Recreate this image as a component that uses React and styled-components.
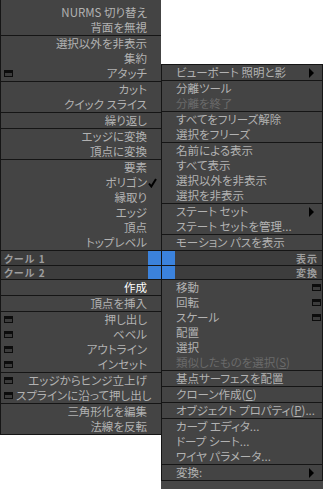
import React from 'react'
import styled, { createGlobalStyle } from 'styled-components'

const GlobalStyle = createGlobalStyle`
  html, body { margin: 0; padding: 0; background: #ffffff; }
  body {
    font-family: "Noto Sans CJK JP", "Noto Sans", sans-serif;
    font-feature-settings: "palt";
  }
`

const LINE = '#151515'

const upperLeft = [
  [{ t: 'NURMS 切り替え' }, { t: '背面を無視' }],
  [{ t: '選択以外を非表示' }, { t: '集約' }, { t: 'アタッチ', box: true }],
  [{ t: 'カット' }, { t: 'クイック スライス' }],
  [{ t: '繰り返し' }],
  [{ t: 'エッジに変換' }, { t: '頂点に変換' }],
  [
    { t: '要素' },
    { t: 'ポリゴン', check: true },
    { t: '縁取り' },
    { t: 'エッジ' },
    { t: '頂点' },
    { t: 'トップレベル' },
  ],
]

const lowerLeft = [
  [{ t: '作成', hot: true }],
  [{ t: '頂点を挿入' }],
  [
    { t: '押し出し', box: true },
    { t: 'ベベル', box: true },
    { t: 'アウトライン', box: true },
    { t: 'インセット', box: true },
  ],
  [
    { t: 'エッジからヒンジ立上げ', box: true },
    { t: 'スプラインに沿って押し出し', box: true },
  ],
  [{ t: '三角形化を編集' }, { t: '法線を反転' }],
]

const upperRight = [
  [{ t: 'ビューポート 照明と影', sub: true }],
  [{ t: '分離ツール' }, { t: '分離を終了', dim: true }],
  [{ t: 'すべてをフリーズ解除' }, { t: '選択をフリーズ' }],
  [{ t: '名前による表示' }, { t: 'すべて表示' }, { t: '選択以外を非表示' }, { t: '選択を非表示' }],
  [{ t: 'ステート セット', sub: true }, { t: 'ステート セットを管理...' }],
  [{ t: 'モーション パスを表示' }],
]

const lowerRight = [
  [
    { t: '移動', box: true },
    { t: '回転', box: true },
    { t: 'スケール', box: true },
    { t: '配置' },
    { t: '選択' },
    { t: '類似したものを選択', key: 'S', dim: true },
  ],
  [{ t: '基点サーフェスを配置' }],
  [{ t: 'クローン作成', key: 'C' }],
  [{ t: 'オブジェクト プロパティ', key: 'P', tail: '...' }],
  [{ t: 'カーブ エディタ...' }, { t: 'ドープ シート...' }, { t: 'ワイヤ パラメータ...' }],
  [{ t: '変換:', sub: true }],
]

const QuadMenu = styled.div`
  display: grid;
  grid-template-columns: 161px 162px;
  grid-template-rows: auto auto 1fr;
  width: 323px;
  height: 489px;
  overflow: hidden;
`

const Quadrant = styled.div`
  background: #444444;
  border-left: 1px solid ${LINE};
  border-right: ${p => (p.$side === 'right' ? `1px solid ${LINE}` : 'none')};
  border-top: ${p => (p.$upper && p.$side === 'right' ? `1px solid ${LINE}` : 'none')};
  border-bottom: 1px solid ${LINE};
  align-self: ${p => (p.$upper ? 'end' : 'start')};
  display: flex;
  flex-direction: column;
`

const Group = styled.div`
  padding-top: ${p => p.$pad || 0}px;
  & + & {
    border-top: 1px solid ${LINE};
  }
`

const Item = styled.div`
  height: 15px;
  display: grid;
  grid-template-columns: ${p => (p.$side === 'left' ? '15px 1fr 14px' : '14px 1fr 14px')};
  align-items: center;
  font-size: 11.5px;
  line-height: 15px;
  white-space: nowrap;
  color: ${p => (p.$dim ? '#6a6a6a' : p.$hot ? '#ffffff' : '#b2b2b2')};
`

const Label = styled.span`
  text-align: ${p => (p.$side === 'left' ? 'right' : 'left')};
  u {
    text-decoration: underline;
    text-underline-offset: 1px;
  }
`

const OptionBox = styled.span`
  width: 9px;
  height: 7px;
  box-sizing: border-box;
  border: 1px solid #0c0c0c;
  border-top-width: 3px;
  background: #3c3c3c;
  justify-self: ${p => (p.$side === 'left' ? 'start' : 'end')};
  margin: ${p => (p.$side === 'left' ? '0 0 0 3px' : '0 1px 0 0')};
`

const SubArrow = styled.span`
  width: 0;
  height: 0;
  border-left: 5px solid #000000;
  border-top: 5px solid transparent;
  border-bottom: 5px solid transparent;
  justify-self: start;
  margin-left: 1px;
`

const Check = styled.svg`
  width: 9px;
  height: 10px;
  justify-self: start;
  margin-left: 1px;
`

const TitleBar = styled.div`
  height: ${p => p.$h}px;
  display: flex;
  flex-direction: ${p => (p.$side === 'left' ? 'row' : 'row-reverse')};
  align-items: stretch;
  background: #3d3d3d;
  border-top: ${p => (p.$upper ? `1px solid ${LINE}` : 'none')};
  border-bottom: ${p => (p.$upper ? 'none' : `1px solid ${LINE}`)};
`

const TitleText = styled.span`
  flex: 1;
  display: flex;
  align-items: center;
  justify-content: ${p => (p.$side === 'left' ? 'flex-start' : 'flex-end')};
  padding: 0 4px 0 3px;
  font-size: 10px;
  font-weight: 700;
  color: #9e9e9e;
  letter-spacing: 1px;
`

const Swatch = styled.span`
  width: 13px;
  background: #3b82dc;
`

const ViewportPeek = styled.div`
  grid-column: 2;
  grid-row: 3;
  background: #464646;
`

function MenuItem({ item, side }) {
  const label = (
    <Label $side={side}>
      {item.t}
      {item.key && (
        <>
          (<u>{item.key}</u>)
        </>
      )}
      {item.tail}
    </Label>
  )
  if (side === 'left') {
    return (
      <Item $side={side} $dim={item.dim} $hot={item.hot}>
        {item.box ? <OptionBox $side={side} /> : <span />}
        {label}
        {item.check ? (
          <Check viewBox="0 0 9 10">
            <path d="M1 5.5 L3.3 8.5 L8 1" fill="none" stroke="#000" strokeWidth="2" />
          </Check>
        ) : (
          <span />
        )}
      </Item>
    )
  }
  return (
    <Item $side={side} $dim={item.dim} $hot={item.hot}>
      <span />
      {label}
      {item.box ? <OptionBox $side={side} /> : item.sub ? <SubArrow /> : <span />}
    </Item>
  )
}

function Quad({ side, upper, title, groups, firstPad, titleH }) {
  const bar = (
    <TitleBar $side={side} $upper={upper} $h={titleH}>
      <TitleText $side={side}>{title}</TitleText>
      <Swatch />
    </TitleBar>
  )
  return (
    <Quadrant $side={side} $upper={upper}>
      {!upper && bar}
      <div>
        {groups.map((g, i) => (
          <Group key={i} $pad={i === 0 ? firstPad : 0}>
            {g.map((item, j) => (
              <MenuItem key={j} item={item} side={side} />
            ))}
          </Group>
        ))}
      </div>
      {upper && bar}
    </Quadrant>
  )
}

export default function App() {
  return (
    <>
      <GlobalStyle />
      <QuadMenu>
        <Quad side="left" upper title="クール 1" groups={upperLeft} firstPad={5} titleH={14} />
        <Quad side="right" upper title="表示" groups={upperRight} titleH={14} />
        <Quad side="left" title="クール 2" groups={lowerLeft} titleH={13} />
        <Quad side="right" title="変換" groups={lowerRight} titleH={13} />
        <ViewportPeek />
      </QuadMenu>
    </>
  )
}
